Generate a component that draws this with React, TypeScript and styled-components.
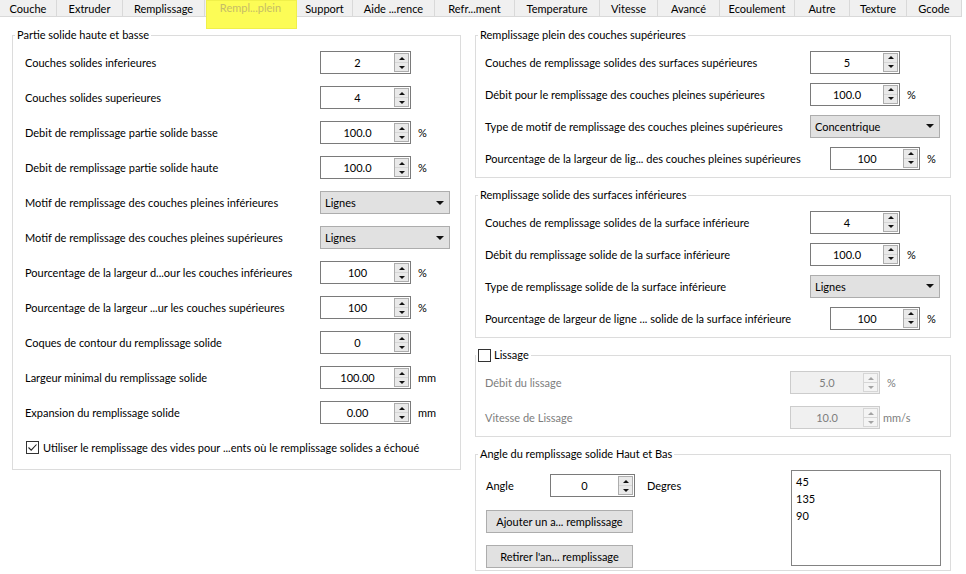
import React from 'react'
import styled, { createGlobalStyle } from 'styled-components'

const GlobalStyle = createGlobalStyle`
  html, body {
    margin: 0;
    padding: 0;
    background: #fff;
  }
  body {
    font-family: Lato, "Liberation Sans", sans-serif;
    font-size: 11px;
    color: #000;
  }
  #root {
    width: 966px;
    height: 574px;
    overflow: hidden;
  }
`

type Field =
  | { kind: 'spin'; label: string; value: string; unit?: string; unitGap?: number; labelW?: number; spinW?: number }
  | { kind: 'combo'; label: string; value: string }

const tabs = [
  { name: 'Couche', w: 57 },
  { name: 'Extruder', w: 66 },
  { name: 'Remplissage', w: 82 },
  { name: 'Rempl...plein', w: 92, active: true },
  { name: 'Support', w: 56 },
  { name: 'Aide ...rence', w: 82 },
  { name: 'Refr...ment', w: 80 },
  { name: 'Temperature', w: 85 },
  { name: 'Vitesse', w: 58 },
  { name: 'Avancé', w: 62 },
  { name: 'Ecoulement', w: 75 },
  { name: 'Autre', w: 55 },
  { name: 'Texture', w: 57 },
  { name: 'Gcode', w: 55 },
]

const leftFields: Field[] = [
  { kind: 'spin', label: 'Couches solides inferieures', value: '2' },
  { kind: 'spin', label: 'Couches solides superieures', value: '4' },
  { kind: 'spin', label: 'Debit de remplissage partie solide basse', value: '100.0', unit: '%' },
  { kind: 'spin', label: 'Debit de remplissage partie solide haute', value: '100.0', unit: '%' },
  { kind: 'combo', label: 'Motif de remplissage des couches pleines inférieures', value: 'Lignes' },
  { kind: 'combo', label: 'Motif de remplissage des couches pleines supérieures', value: 'Lignes' },
  { kind: 'spin', label: 'Pourcentage de la largeur d...our les couches inférieures', value: '100', unit: '%' },
  { kind: 'spin', label: 'Pourcentage de la largeur ...ur les couches supérieures', value: '100', unit: '%' },
  { kind: 'spin', label: 'Coques de contour du remplissage solide', value: '0' },
  { kind: 'spin', label: 'Largeur minimal du remplissage solide', value: '100.00', unit: 'mm' },
  { kind: 'spin', label: 'Expansion du remplissage solide', value: '0.00', unit: 'mm' },
]

const topFields: Field[] = [
  { kind: 'spin', label: 'Couches de remplissage solides des surfaces supérieures', value: '5' },
  { kind: 'spin', label: 'Débit pour le remplissage des couches pleines supérieures', value: '100.0', unit: '%' },
  { kind: 'combo', label: 'Type de motif de remplissage des couches pleines supérieures', value: 'Concentrique' },
  { kind: 'spin', label: 'Pourcentage de la largeur de lig... des couches pleines supérieures', value: '100', unit: '%', labelW: 345 },
]

const bottomFields: Field[] = [
  { kind: 'spin', label: 'Couches de remplissage solides de la surface inférieure', value: '4' },
  { kind: 'spin', label: 'Débit du remplissage solide de la surface inférieure', value: '100.0', unit: '%' },
  { kind: 'combo', label: 'Type de remplissage solide de la surface inférieure', value: 'Lignes' },
  { kind: 'spin', label: 'Pourcentage de largeur de ligne ... solide de la surface inférieure', value: '100', unit: '%', labelW: 345 },
]

const ironingFields: Field[] = [
  { kind: 'spin', label: 'Débit du lissage', value: '5.0', unit: '%' },
  { kind: 'spin', label: 'Vitesse de Lissage', value: '10.0', unit: 'mm/s', unitGap: 3 },
]

/* tabs */

const TabBar = styled.div`
  display: flex;
  height: 17px;
`

const Tab = styled.div<{ $w: number; $active?: boolean }>`
  position: relative;
  flex: none;
  box-sizing: border-box;
  width: ${p => p.$w}px;
  height: 17px;
  display: flex;
  align-items: center;
  justify-content: center;
  white-space: nowrap;
  background: #f0f0f0;
  border-right: 1px solid #d9d9d9;
  border-bottom: 1px solid #d9d9d9;
  color: ${p => (p.$active ? '#c6bd66' : '#000')};
  ${p =>
    p.$active &&
    `
    align-items: flex-start;
    padding-top: 1px;
    &::after {
      content: '';
      position: absolute;
      left: 1px;
      right: -1px;
      top: 0;
      height: 29px;
      background: #fcfc56;
      box-shadow: inset 0 0 0 1px #f0f04a;
    }
  `}
`

const TabText = styled.span`
  position: relative;
  z-index: 1;
`

/* layout */

const Content = styled.div`
  display: flex;
  gap: 14px;
  padding: 10px 0 0 12px;
`

const LeftColumn = styled.div`
  flex: none;
  width: 449px;
`

const RightColumn = styled.div`
  flex: none;
  width: 476px;
  display: flex;
  flex-direction: column;
  gap: 9px;
`

const GroupBox = styled.fieldset`
  margin: 0;
  padding: 0;
  min-width: 0;
  border: 1px solid #dcdcdc;
`

const Legend = styled.legend<{ $inset?: number }>`
  margin-left: ${p => p.$inset ?? 2}px;
  padding: 0 2px;
  height: 16px;
  line-height: 16px;
  white-space: nowrap;
`

const LegendInner = styled.span`
  display: inline-flex;
  align-items: center;
  gap: 3px;
`

const GroupBody = styled.div<{ $pad: string }>`
  padding: ${p => p.$pad};
`

const Row = styled.div<{ $h: number }>`
  display: flex;
  align-items: center;
  height: ${p => p.$h}px;
`

const Label = styled.span<{ $w: number; $disabled?: boolean }>`
  flex: none;
  width: ${p => p.$w}px;
  white-space: nowrap;
  color: ${p => (p.$disabled ? '#7d7d7d' : '#000')};
`

const Unit = styled.span<{ $gap: number; $disabled?: boolean }>`
  margin-left: ${p => p.$gap}px;
  color: ${p => (p.$disabled ? '#7d7d7d' : '#000')};
`

/* controls */

const SpinFrame = styled.div<{ $w: number; $disabled?: boolean }>`
  flex: none;
  box-sizing: border-box;
  width: ${p => p.$w}px;
  height: 23px;
  display: flex;
  border: 1px solid ${p => (p.$disabled ? '#cccccc' : '#7a7a7a')};
  background: ${p => (p.$disabled ? '#f0f0f0' : '#fff')};
`

const SpinValue = styled.span<{ $disabled?: boolean }>`
  flex: 1;
  text-align: center;
  line-height: 21px;
  color: ${p => (p.$disabled ? '#7d7d7d' : '#000')};
`

const SpinButtons = styled.div<{ $disabled?: boolean }>`
  box-sizing: border-box;
  width: 15px;
  margin: 1px 1px 1px 0;
  display: flex;
  flex-direction: column;
  border: 1px solid ${p => (p.$disabled ? '#d6d6d6' : '#adadad')};
`

const SpinHalf = styled.div<{ $disabled?: boolean }>`
  flex: 1;
  display: flex;
  align-items: center;
  justify-content: center;
  background: ${p => (p.$disabled ? '#f4f4f4' : '#e9e9e9')};
  & + & {
    border-top: 1px solid ${p => (p.$disabled ? '#d6d6d6' : '#adadad')};
  }
`

const Arrow = styled.span<{ $up?: boolean; $disabled?: boolean }>`
  width: 0;
  height: 0;
  border-left: 3px solid transparent;
  border-right: 3px solid transparent;
  ${p => (p.$up ? 'border-bottom' : 'border-top')}: 3px solid ${p => (p.$disabled ? '#a3a3a3' : '#111')};
`

const Combo = styled.div<{ $w: number }>`
  flex: none;
  box-sizing: border-box;
  width: ${p => p.$w}px;
  height: 23px;
  display: flex;
  align-items: center;
  justify-content: space-between;
  padding: 0 5px 0 4px;
  border: 1px solid #adadad;
  background: #e1e1e1;
`

const ComboArrow = styled.span`
  width: 0;
  height: 0;
  border-left: 4px solid transparent;
  border-right: 4px solid transparent;
  border-top: 4px solid #111;
`

const CheckBox = styled.span`
  flex: none;
  box-sizing: border-box;
  width: 13px;
  height: 13px;
  display: inline-flex;
  align-items: center;
  justify-content: center;
  border: 1px solid #333;
  background: #fff;
`

const CheckRow = styled.div`
  display: flex;
  align-items: center;
  gap: 4px;
  height: 35px;
  padding-left: 1px;
`

const AngleBody = styled.div`
  display: flex;
  justify-content: space-between;
  padding: 8px 9px 2px 10px;
`

const AngleControls = styled.div`
  display: flex;
  flex-direction: column;
  gap: 12px;
  padding-top: 4px;
`

const AngleRow = styled.div`
  display: flex;
  align-items: center;
  margin-bottom: 1px;
`

const PushButton = styled.div`
  box-sizing: border-box;
  width: 147px;
  height: 23px;
  display: flex;
  align-items: center;
  justify-content: center;
  border: 1px solid #adadad;
  background: #e1e1e1;
`

const ListBox = styled.div`
  box-sizing: border-box;
  width: 150px;
  height: 96px;
  padding: 2px 4px;
  line-height: 17px;
  border: 1px solid #828282;
  background: #fff;
`

/* pieces */

const SpinBox = ({ value, width, disabled }: { value: string; width: number; disabled?: boolean }) => (
  <SpinFrame $w={width} $disabled={disabled}>
    <SpinValue $disabled={disabled}>{value}</SpinValue>
    <SpinButtons $disabled={disabled}>
      <SpinHalf $disabled={disabled}>
        <Arrow $up $disabled={disabled} />
      </SpinHalf>
      <SpinHalf $disabled={disabled}>
        <Arrow $disabled={disabled} />
      </SpinHalf>
    </SpinButtons>
  </SpinFrame>
)

const Check = ({ checked }: { checked?: boolean }) => (
  <CheckBox>
    {checked && (
      <svg width="11" height="11" viewBox="0 0 11 11">
        <polyline points="1.5,5.5 4.2,8.2 9.5,2.5" fill="none" stroke="#222" strokeWidth="1.1" />
      </svg>
    )}
  </CheckBox>
)

type FieldListProps = {
  fields: Field[]
  labelW: number
  rowH: number
  spinW: number
  comboW: number
  disabled?: boolean
}

const FieldList = ({ fields, labelW, rowH, spinW, comboW, disabled }: FieldListProps) => (
  <>
    {fields.map((f, idx) => (
      <Row key={idx} $h={rowH}>
        <Label $w={(f.kind === 'spin' && f.labelW) || labelW} $disabled={disabled}>
          {f.label}
        </Label>
        {f.kind === 'combo' ? (
          <Combo $w={comboW}>
            <span>{f.value}</span>
            <ComboArrow />
          </Combo>
        ) : (
          <>
            <SpinBox value={f.value} width={f.spinW || spinW} disabled={disabled} />
            {f.unit && (
              <Unit $gap={f.unitGap || 7} $disabled={disabled}>
                {f.unit}
              </Unit>
            )}
          </>
        )}
      </Row>
    ))}
  </>
)

const App = () => (
  <>
    <GlobalStyle />
    <TabBar>
      {tabs.map(t => (
        <Tab key={t.name} $w={t.w} $active={t.active}>
          <TabText>{t.name}</TabText>
        </Tab>
      ))}
    </TabBar>
    <Content>
      <LeftColumn>
        <GroupBox>
          <Legend>Partie solide haute et basse</Legend>
          <GroupBody $pad="2px 0 4px 12px">
            <FieldList fields={leftFields} labelW={295} rowH={35} spinW={91} comboW={130} />
            <CheckRow>
              <Check checked />
              <span>Utiliser le remplissage des vides pour ...ents où le remplissage solides a échoué</span>
            </CheckRow>
          </GroupBody>
        </GroupBox>
      </LeftColumn>
      <RightColumn>
        <GroupBox>
          <Legend>Remplissage plein des couches supérieures</Legend>
          <GroupBody $pad="3px 0 3px 9px">
            <FieldList fields={topFields} labelW={325} rowH={32} spinW={90} comboW={130} />
          </GroupBody>
        </GroupBox>
        <GroupBox>
          <Legend>Remplissage solide des surfaces inférieures</Legend>
          <GroupBody $pad="3px 0 3px 9px">
            <FieldList fields={bottomFields} labelW={325} rowH={32} spinW={90} comboW={130} />
          </GroupBody>
        </GroupBox>
        <GroupBox>
          <Legend $inset={0}>
            <LegendInner>
              <Check />
              Lissage
            </LegendInner>
          </Legend>
          <GroupBody $pad="2px 0 1px 9px">
            <FieldList fields={ironingFields} labelW={305} rowH={35} spinW={90} comboW={130} disabled />
          </GroupBody>
        </GroupBox>
        <GroupBox>
          <Legend>Angle du remplissage solide Haut et Bas</Legend>
          <AngleBody>
            <AngleControls>
              <AngleRow>
                <Label $w={64}>Angle</Label>
                <SpinBox value="0" width={85} />
                <Unit $gap={12}>Degres</Unit>
              </AngleRow>
              <PushButton>Ajouter un a... remplissage</PushButton>
              <PushButton>Retirer l'an... remplissage</PushButton>
            </AngleControls>
            <ListBox>
              <div>45</div>
              <div>135</div>
              <div>90</div>
            </ListBox>
          </AngleBody>
        </GroupBox>
      </RightColumn>
    </Content>
  </>
)

export default App
